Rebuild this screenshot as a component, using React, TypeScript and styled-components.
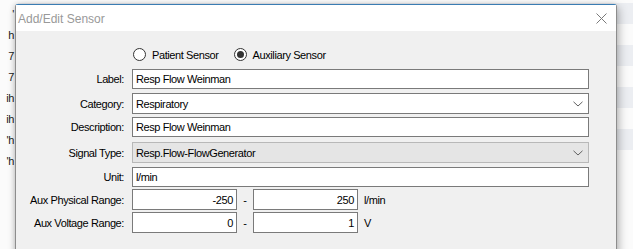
import React from "react";
import styled, { createGlobalStyle } from "styled-components";

const Global = createGlobalStyle`
  html, body { margin: 0; padding: 0; background: #fbfbfb; }
  body { width: 633px; height: 249px; overflow: hidden; font-family: "Liberation Sans", Arial, sans-serif; }
  * { box-sizing: border-box; }
`;

const Desktop = styled.div`
  position: relative;
  width: 633px;
  height: 249px;
  overflow: hidden;
  background: #fbfbfb;
  padding-top: 3px;
`;

const BgRow = styled.div`
  height: 21px;
  display: flex;
  align-items: center;
`;

const BgCell = styled.div`
  width: 10px;
  margin-left: 4px;
  text-align: right;
  font-size: 11px;
  letter-spacing: -0.4px;
  color: #1a1a1a;
  white-space: nowrap;
`;

const BgFill = styled.div<{ $stripe: boolean }>`
  flex: 1;
  height: 100%;
  margin-left: 4px;
  background: ${(p) => (p.$stripe ? "#eceef2" : "#fbfbfb")};
`;

const Window = styled.div`
  position: absolute;
  left: 15px;
  top: 4px;
  width: 602px;
  height: 270px;
  background: #f0f0f0;
  border: 1px solid #8d8d8d;
  border-top: 1px solid #3a7db3;
  border-radius: 3px 3px 0 0;
  box-shadow: 2px 3px 10px rgba(0, 0, 0, 0.28), -1px 0 5px rgba(0, 0, 0, 0.12);
  display: flex;
  flex-direction: column;
`;

const TitleBar = styled.div`
  height: 26px;
  background: #ffffff;
  display: flex;
  align-items: center;
  justify-content: space-between;
  padding-left: 2px;
  padding-right: 9px;
`;

const Title = styled.span`
  font-size: 12px;
  color: #999999;
  padding-top: 1px;
`;

const CloseBtn = styled.div`
  width: 12px;
  height: 12px;
  display: flex;
  align-items: center;
  justify-content: center;
`;

const Content = styled.div`
  display: flex;
  flex-direction: column;
  font-size: 11px;
  letter-spacing: -0.4px;
  color: #000;
`;

const RadioRow = styled.div`
  display: flex;
  align-items: center;
  height: 13px;
  margin-top: 17px;
  margin-left: 117px;
`;

const RadioItem = styled.label`
  display: flex;
  align-items: center;
  gap: 6px;
  margin-right: 15px;
`;

const RadioCircle = styled.span<{ $checked: boolean }>`
  width: 13px;
  height: 13px;
  border-radius: 50%;
  border: 1px solid #333333;
  background: #ffffff;
  display: flex;
  align-items: center;
  justify-content: center;
  &::after {
    content: "";
    width: 7px;
    height: 7px;
    border-radius: 50%;
    background: ${(p) => (p.$checked ? "#333333" : "transparent")};
  }
`;

const Row = styled.div<{ $mt: number }>`
  display: flex;
  align-items: center;
  margin-top: ${(p) => p.$mt}px;
`;

const Label = styled.div`
  width: 108px;
  margin-right: 8px;
  text-align: right;
  white-space: nowrap;
`;

const TextBox = styled.div<{ $w: number; $h?: number; $right?: boolean }>`
  width: ${(p) => p.$w}px;
  height: ${(p) => p.$h ?? 20}px;
  border: 1px solid #7a7a7a;
  background: #ffffff;
  display: flex;
  align-items: center;
  justify-content: ${(p) => (p.$right ? "flex-end" : "flex-start")};
  padding: 0 3px;
  white-space: nowrap;
`;

const Combo = styled.div<{ $disabled?: boolean }>`
  width: 457px;
  height: 21px;
  border: 1px solid ${(p) => (p.$disabled ? "#b8b8b8" : "#7a7a7a")};
  background: ${(p) => (p.$disabled ? "#e5e5e5" : "#ffffff")};
  display: flex;
  align-items: center;
  justify-content: space-between;
  padding: 0 5px 0 3px;
`;

const Dash = styled.span`
  width: 16px;
  text-align: center;
`;

const Unit = styled.span`
  margin-left: 6px;
`;

const Chevron = () => (
  <svg width="10" height="6" viewBox="0 0 10 6">
    <path d="M0.5 0.8 L5 5 L9.5 0.8" fill="none" stroke="#606060" strokeWidth="1" />
  </svg>
);

const rows = ["'", "h", "7", "7", "ih", "ih", "'h", "'h"];

export default function App() {
  return (
    <>
      <Global />
      <Desktop>
        {rows.map((t, i) => (
          <BgRow key={i}>
            <BgCell>{t}</BgCell>
            <BgFill $stripe={i % 2 === 0} />
          </BgRow>
        ))}
        <Window>
          <TitleBar>
            <Title>Add/Edit Sensor</Title>
            <CloseBtn>
              <svg width="11" height="11" viewBox="0 0 11 11">
                <path d="M0.5 0.5 L10.5 10.5 M10.5 0.5 L0.5 10.5" stroke="#7a7a7a" strokeWidth="1" />
              </svg>
            </CloseBtn>
          </TitleBar>
          <Content>
            <RadioRow>
              <RadioItem>
                <RadioCircle $checked={false} />
                Patient Sensor
              </RadioItem>
              <RadioItem>
                <RadioCircle $checked={true} />
                Auxiliary Sensor
              </RadioItem>
            </RadioRow>
            <Row $mt={8}>
              <Label>Label:</Label>
              <TextBox $w={457}>Resp Flow Weinman</TextBox>
            </Row>
            <Row $mt={4}>
              <Label>Category:</Label>
              <Combo>
                <span>Respiratory</span>
                <Chevron />
              </Combo>
            </Row>
            <Row $mt={3}>
              <Label>Description:</Label>
              <TextBox $w={457}>Resp Flow Weinman</TextBox>
            </Row>
            <Row $mt={5}>
              <Label>Signal Type:</Label>
              <Combo $disabled>
                <span>Resp.Flow-FlowGenerator</span>
                <Chevron />
              </Combo>
            </Row>
            <Row $mt={4}>
              <Label>Unit:</Label>
              <TextBox $w={457}>l/min</TextBox>
            </Row>
            <Row $mt={2}>
              <Label>Aux Physical Range:</Label>
              <TextBox $w={105} $h={21} $right>-250</TextBox>
              <Dash>-</Dash>
              <TextBox $w={105} $h={21} $right>250</TextBox>
              <Unit>l/min</Unit>
            </Row>
            <Row $mt={2}>
              <Label>Aux Voltage Range:</Label>
              <TextBox $w={105} $h={21} $right>0</TextBox>
              <Dash>-</Dash>
              <TextBox $w={105} $h={21} $right>1</TextBox>
              <Unit>V</Unit>
            </Row>
          </Content>
        </Window>
      </Desktop>
    </>
  );
}
